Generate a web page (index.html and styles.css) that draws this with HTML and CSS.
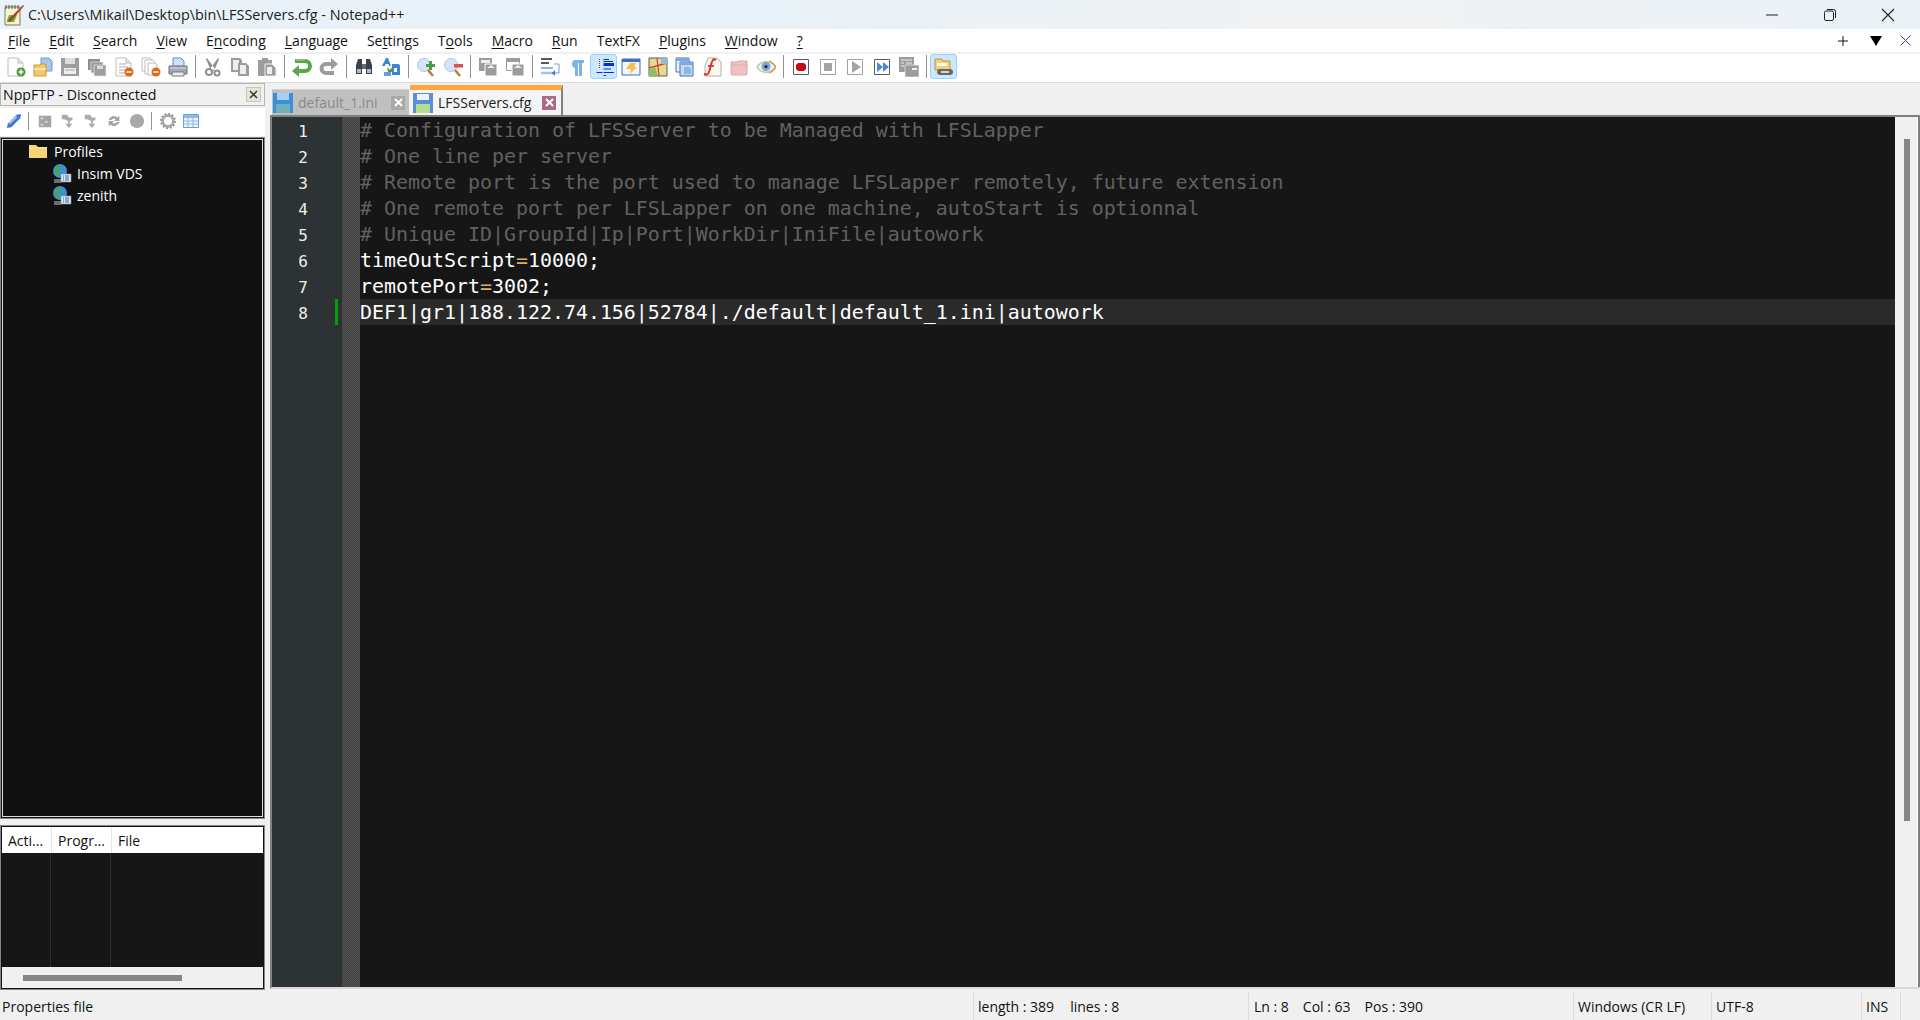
FILE: index.html
```html
<!DOCTYPE html>
<html lang="en">
<head>
<meta charset="utf-8">
<title>Notepad++</title>
<link rel="stylesheet" href="styles.css">
</head>
<body>
<svg class="defs" width="0" height="0" aria-hidden="true">
<defs>
<symbol id="page" viewBox="0 0 20 20"><path d="M2 1h10l5 5v13H2z" fill="#fff" stroke="#bdbdbd"/><path d="M12 1v5h5" fill="#e6e6e6" stroke="#bdbdbd"/></symbol>
<symbol id="lines" viewBox="0 0 20 20"><path d="M5 7h7M5 10h9M5 13h9M5 16h6" stroke="#a8a8a8"/></symbol>
<symbol id="badge" viewBox="0 0 20 20"><circle cx="15" cy="15" r="4.5" fill="#e2691c"/><path d="M12.5 15h5" stroke="#fff" stroke-width="1.6"/></symbol>
</defs>
</svg>
<div class="app">
  <header class="titlebar">
    <svg class="app-icon" width="22" height="22" viewBox="0 0 22 22"><path d="M2 3h15v18H2z" fill="#f6f2cf" stroke="#807b52"/><path d="M3 1v4M6 1v4M9 1v4M12 1v4M15 1v4" stroke="#555"/><path d="M4 16l2-5 8 0-3 7H4z" fill="#6ab33c"/><path d="M6 15L20 1l1 1-13 15-3 1z" fill="#b23a2c"/></svg>
    <span class="title-text">C:\Users\Mikail\Desktop\bin\LFSServers.cfg - Notepad++</span>
    <div class="window-controls">
      <svg width="14" height="14" viewBox="0 0 14 14"><path d="M1 7h12" stroke="#222" stroke-width="1"/></svg>
      <svg width="14" height="14" viewBox="0 0 14 14"><rect x="1.5" y="3" width="9" height="9.5" rx="1.5" fill="none" stroke="#222"/><path d="M4 1.5h6.5a2 2 0 0 1 2 2V10" fill="none" stroke="#222"/></svg>
      <svg width="14" height="14" viewBox="0 0 14 14"><path d="M1 1l12 12M13 1L1 13" stroke="#222" stroke-width="1.1"/></svg>
    </div>
  </header>
  <nav class="menubar">
    <span class="menu-item"><u>F</u>ile</span>
    <span class="menu-item"><u>E</u>dit</span>
    <span class="menu-item"><u>S</u>earch</span>
    <span class="menu-item"><u>V</u>iew</span>
    <span class="menu-item">E<u>n</u>coding</span>
    <span class="menu-item"><u>L</u>anguage</span>
    <span class="menu-item">Se<u>t</u>tings</span>
    <span class="menu-item">T<u>o</u>ols</span>
    <span class="menu-item"><u>M</u>acro</span>
    <span class="menu-item"><u>R</u>un</span>
    <span class="menu-item">TextFX</span>
    <span class="menu-item"><u>P</u>lugins</span>
    <span class="menu-item"><u>W</u>indow</span>
    <span class="menu-item"><u>?</u></span>
    <div class="menu-right">
      <svg width="10" height="10" viewBox="0 0 10 10"><path d="M5 0v10M0 5h10" stroke="#111"/></svg>
      <svg width="12" height="10" viewBox="0 0 12 10"><path d="M0 0h12L6 10z" fill="#000"/></svg>
      <svg width="11" height="11" viewBox="0 0 11 11"><path d="M.5.5l10 10M10.500.5l-10 10" stroke="#33506e"/></svg>
    </div>
  </nav>
  <div class="toolbar">
    <span class="tool"><svg width="20" height="20"><use href="#page"/><circle cx="15" cy="15" r="4.500" fill="#4d9a3a"/><path d="M12.500 15h5M15 12.500v5" stroke="#fff" stroke-width="1.500"/></svg></span>
    <span class="tool"><svg width="20" height="20" viewBox="0 0 20 20"><path d="M8 1h8l3 3v10H8z" fill="#a9c7ea" stroke="#6f9bd0"/><path d="M1 8h6l1-1h5v12H1z" fill="#f6c765" stroke="#cc9638"/><path d="M1 12h12" stroke="#fff"/></svg></span>
    <span class="tool"><svg width="20" height="20" viewBox="0 0 20 20"><path d="M1 1h18v18H1z" fill="#9d9d9d"/><path d="M5 1h10v6H5z" fill="#ddd"/><path d="M4 11h12v6H4z" fill="#eee"/><path d="M5 13h10" stroke="#aaa"/></svg></span>
    <span class="tool"><svg width="20" height="20" viewBox="0 0 20 20"><path d="M1 2h12v11H1z" fill="#8f8f8f"/><path d="M4 5h12v11H4z" fill="#9a9a9a" stroke="#e8e8e8" stroke-width=".7"/><path d="M7 8h12v11H7z" fill="#9d9d9d" stroke="#e8e8e8" stroke-width=".7"/><path d="M10 9h6v3h-6z" fill="#ddd"/></svg></span>
    <span class="tool"><svg width="20" height="20"><use href="#page"/><use href="#lines"/><use href="#badge"/></svg></span>
    <span class="tool"><svg width="20" height="20" viewBox="0 0 20 20"><path d="M1 1h8l2 2v11H1z" fill="#fff" stroke="#bdbdbd"/><path d="M4 3h8l2 2v12H4z" fill="#fff" stroke="#bdbdbd"/><path d="M7 6h7l2 2v10H7z" fill="#fff" stroke="#bdbdbd"/><circle cx="15" cy="15" r="4.500" fill="#e2691c"/><path d="M12.500 15h5" stroke="#fff" stroke-width="1.600"/></svg></span>
    <span class="tool"><svg width="20" height="20" viewBox="0 0 20 20"><path d="M5 1h8l3 3v6H5z" fill="#cfe1f6" stroke="#5c8fc9"/><path d="M1 9h18v8H1z" fill="#a4aab2" stroke="#6a6f76"/><path d="M4 15h12v4H4z" fill="#ececec" stroke="#777"/><path d="M2 11h16" stroke="#dde0e4"/></svg></span>
    <span class="sep"></span>
    <span class="tool"><svg width="20" height="20" viewBox="0 0 20 20"><path d="M7 12L15 1l1 1-5 12zM12 12L4 1 3 2l5 12z" fill="#8f8f8f"/><circle cx="6" cy="15" r="3" fill="none" stroke="#8f8f8f" stroke-width="2"/><circle cx="14" cy="16" r="2.600" fill="none" stroke="#8f8f8f" stroke-width="2"/></svg></span>
    <span class="tool"><svg width="20" height="20" viewBox="0 0 20 20"><path d="M1 1h9l2 2v12H1z" fill="#9c9c9c"/><path d="M3 3h6v10H3z" fill="#eee"/><path d="M8 6h8l3 3v10H8z" fill="#9c9c9c"/><path d="M10 8h6v9h-6z" fill="#eee"/></svg></span>
    <span class="tool"><svg width="20" height="20" viewBox="0 0 20 20"><path d="M1 3h4V1h6v2h4v16H1z" fill="#9c9c9c"/><path d="M8 7h7l4 4v8H8z" fill="#9c9c9c" stroke="#eee"/><path d="M10 10h5v7h-5z" fill="#eee"/></svg></span>
    <span class="sep"></span>
    <span class="tool"><svg width="20" height="20" viewBox="0 0 20 20"><path d="M3 4h10a5 5 0 0 1 0 10H6" fill="none" stroke="#5aa64c" stroke-width="4"/><path d="M0 14l7-6v12z" fill="#5aa64c"/><path d="M4 3h9" stroke="#a9d49a"/></svg></span>
    <span class="tool"><svg width="20" height="20" viewBox="0 0 20 20"><path d="M14 7H7a4.500 4.500 0 0 0 0 9h8" fill="none" stroke="#9c9c9c" stroke-width="4"/><path d="M19 7l-7-6v12z" fill="#9c9c9c"/></svg></span>
    <span class="sep"></span>
    <span class="tool"><svg width="20" height="20" viewBox="0 0 20 20"><path d="M4 2h4v15H2V8zM12 2h4l2 6v9h-6z" fill="#39424d"/><path d="M8 7h4v5H8z" fill="#616a75"/><path d="M3 12h4v4H3zM13 12h4v4h-4z" fill="#b0bac6"/></svg></span>
    <span class="tool"><svg width="20" height="20" viewBox="0 0 20 20"><path d="M1 9L5 1h2l3 8H8l-.5-2h-3L4 9z" fill="#3d83d4"/><path d="M6 10l3 3 1-3 2 5-5 0z" fill="#4f9a3f"/><path d="M11 7h6a2 2 0 0 1 2 2v9h-8z" fill="#3d83d4"/><path d="M13 11h3v4h-3z" fill="#fff"/><path d="M3 15h7v4H3z" fill="#3d83d4" opacity=".8"/></svg></span>
    <span class="sep"></span>
    <span class="tool"><svg width="20" height="20" viewBox="0 0 20 20"><circle cx="8" cy="8" r="6.500" fill="#d3e5f6" stroke="#a9c6e2"/><path d="M12 13l5 6" stroke="#b77c3e" stroke-width="2.500"/><path d="M10 7h3V4h3v3h3v3h-3v3h-3v-3h-3z" fill="#4f9d4a"/></svg></span>
    <span class="tool"><svg width="20" height="20" viewBox="0 0 20 20"><circle cx="8" cy="8" r="6.500" fill="#d3e5f6" stroke="#a9c6e2"/><path d="M12 13l5 6" stroke="#b77c3e" stroke-width="2.500"/><path d="M11 7h9v3.500h-9z" fill="#e14d55"/></svg></span>
    <span class="sep"></span>
    <span class="tool"><svg width="20" height="20" viewBox="0 0 20 20"><path d="M1 1h13v13H1z" fill="#9c9c9c"/><path d="M3 3h9v3H3z" fill="#eee"/><path d="M7 7h12v12H7z" fill="#9c9c9c" stroke="#fff"/><path d="M9 11l4-3 4 3z" fill="#eee"/></svg></span>
    <span class="tool"><svg width="20" height="20" viewBox="0 0 20 20"><path d="M1.500 1.500h13v12h-13z" fill="#fff" stroke="#9c9c9c"/><path d="M1 1h14v4H1z" fill="#9c9c9c"/><path d="M7 7h12v12H7z" fill="#9c9c9c" stroke="#fff"/><path d="M9 11l4-3 4 3z" fill="#eee"/></svg></span>
    <span class="sep"></span>
    <span class="tool"><svg width="20" height="20" viewBox="0 0 20 20"><path d="M1 2h11M1 6h8" stroke="#222" stroke-width="1.500"/><path d="M1 11h12" stroke="#6a9bdb" stroke-width="1.500"/><path d="M1 16h12" stroke="#9cc0ea" stroke-width="2.500"/><path d="M14 7h5v9h-7" fill="none" stroke="#6a9bdb"/><path d="M15 13v6l-3-3z" fill="#3a78c8"/></svg></span>
    <span class="tool"><svg width="20" height="20" viewBox="0 0 20 20"><path d="M8 3h9v3h-2v13h-3V6h-1v13H8v-8a4 4 0 0 1-3-4 4 4 0 0 1 3-4z" fill="#7fb0e8"/></svg></span>
    <span class="tool tool-active"><svg width="20" height="20" viewBox="0 0 20 20"><path d="M9.500 2.500H15M9.500 4.500H19M9.500 12H17M2.500 15.500h6M9.500 15.500H20M9.500 18.500H12" stroke="#0b2be0" fill="none"/><path d="M9.500 6H20v3H9.500z" fill="#0b2be0"/><path d="M5.500 2v10" stroke="#c22" stroke-dasharray="1 1"/></svg></span>
    <span class="tool"><svg width="20" height="20" viewBox="0 0 20 20"><path d="M1 2h18v16H1z" fill="#f2f6fb" stroke="#3f6fb5"/><path d="M1 2h18v3H1z" fill="#3f6fb5"/><path d="M9 6h6l-2 4h3l-7 7 1-5H5z" fill="#f1c245"/></svg></span>
    <span class="tool"><svg width="20" height="20" viewBox="0 0 20 20"><path d="M1 1h18v18H1z" fill="#e3dc8c" stroke="#5b5b5b"/><path d="M9 1l2 18M1 11L19 6" stroke="#c94b37" stroke-width="1.300"/><path d="M1 13l6-3 3 9H1z" fill="#8cc063"/><path d="M13 1h6v6h-6z" fill="#8fb9dc"/></svg></span>
    <span class="tool"><svg width="20" height="20" viewBox="0 0 20 20"><path d="M1 1h13v14H1z" fill="#e6effa" stroke="#3f74bd"/><path d="M1 1h13v3H1z" fill="#7fa9dc"/><path d="M5 5h13v14H5z" fill="#c4d8f1" stroke="#3f74bd"/><path d="M5 5h13v3H5z" fill="#7fa9dc"/><path d="M9 10h5l2 2v5H9z" fill="#8fb3e4"/></svg></span>
    <span class="tool"><svg width="20" height="20" viewBox="0 0 20 20"><path d="M6 1h9l4 4v14H3V9z" fill="#faf8f0" stroke="#b7b0a0"/><path d="M14 3c-3-2-4 1-5 5l-2 7c-1 3-3 3-5 2" fill="none" stroke="#d9342c" stroke-width="2"/><path d="M6 9h6" stroke="#d9342c" stroke-width="1.800"/></svg></span>
    <span class="tool"><svg width="20" height="20" viewBox="0 0 20 20"><path d="M2 5h6l1-1h9v13a1 1 0 0 1-1 1H3a1 1 0 0 1-1-1z" fill="#f0c1c1" stroke="#dba6a6"/><path d="M2 8h16" stroke="#e9a9a9"/></svg></span>
    <span class="tool"><svg width="20" height="20" viewBox="0 0 20 20"><path d="M1 10c4-7 14-7 19 0-5 7-15 7-19 0z" fill="#eef2ee" stroke="#bcc59e" stroke-width="1.500"/><path d="M13 4c3 1 5 3 7 6-2 3-4 5-7 6" fill="none" stroke="#d9a162" stroke-width="1.500"/><circle cx="10" cy="9.500" r="4.500" fill="#7da6d6"/><circle cx="10" cy="9.500" r="1.600" fill="#223"/></svg></span>
    <span class="sep"></span>
    <span class="tool"><svg width="20" height="20" viewBox="0 0 20 20"><path d="M2.500 2.500h15v15h-15z" fill="#fff" stroke="#5a5a5a"/><path d="M7 6h6l2 2v4l-2 2H7l-2-2V8z" fill="#c80914"/></svg></span>
    <span class="tool"><svg width="20" height="20" viewBox="0 0 20 20"><path d="M2.500 2.500h15v15h-15z" fill="#fff" stroke="#a3a3a3"/><path d="M6 6h8v8H6z" fill="#a3a3a3"/></svg></span>
    <span class="tool"><svg width="20" height="20" viewBox="0 0 20 20"><path d="M2.500 2.500h15v15h-15z" fill="#fff" stroke="#a3a3a3"/><path d="M7 4l9 6-9 6z" fill="#a3a3a3"/></svg></span>
    <span class="tool"><svg width="20" height="20" viewBox="0 0 20 20"><path d="M2.500 2.500h15v15h-15z" fill="#fff" stroke="#5a5a5a"/><path d="M5 5l6 5-6 5zM11 5l6 5-6 5z" fill="#4c86da"/></svg></span>
    <span class="tool"><svg width="20" height="20" viewBox="0 0 20 20"><path d="M0 0h15v15H0z" fill="#9c9c9c"/><path d="M2 3h11M2 6h3M7 6h6M2 9h3M7 9h4" stroke="#eee"/><path d="M6 8h14v12H6z" fill="#9c9c9c" stroke="#eee" stroke-width=".7"/><path d="M13 11h5v2h-5z" fill="#eee"/></svg></span>
    <span class="sep"></span>
    <span class="tool tool-active"><svg width="20" height="20" viewBox="0 0 20 20"><path d="M1 2h7l1 2h7v9H1z" fill="#f6cf72" stroke="#bd9444"/><path d="M3 6h10v3H3z" fill="#fff"/><path d="M6 12h10a3 3 0 0 1 0 6H6a3 3 0 0 1 0-6z" fill="#666"/><path d="M7 15h8" stroke="#d5d5d5" stroke-width="2"/></svg></span>
  </div>
  <main class="workspace">
    <aside class="sidepanel">
      <div class="panel-title">
        <span>NppFTP - Disconnected</span>
        <span class="panel-close"><svg width="9" height="9" viewBox="0 0 9 9"><path d="M1 1l7 7M8 1L1 8" stroke="#333" stroke-width="1.500"/></svg></span>
      </div>
      <div class="panel-tools">
        <span class="ptool"><svg viewBox="0 0 18 18"><path d="M2 12L12 2l5-1-1 5L6 16l-5 1z" fill="#3f78c6"/><path d="M4 12l8-8" stroke="#a9c9ec" stroke-width="2"/></svg></span>
        <span class="psep"></span>
        <span class="ptool"><svg viewBox="0 0 18 18"><path d="M2 3h14v13H2z" fill="#a5a5a5"/><path d="M4 5h3v2H4zM9 9h3v2H9zM4 12h3v2H4z" fill="#d5d5d5"/></svg></span>
        <span class="ptool"><svg viewBox="0 0 18 18"><path d="M2 2h6l2 3h4v3l-3 1v3h3l-4 5-4-5h3V9L5 7H2z" fill="#ababab"/></svg></span>
        <span class="ptool"><svg viewBox="0 0 18 18"><path d="M2 2h6l2 3h4v3l-3 1v3h3l-4 5-4-5h3V9L5 7H2z" fill="#ababab"/></svg></span>
        <span class="ptool"><svg viewBox="0 0 18 18"><path d="M3 8a6 6 0 0 1 10-3l2-2v6H9l2-2a3.500 3.500 0 0 0-5 1zM15 10a6 6 0 0 1-10 3l-2 2V9h6l-2 2a3.500 3.500 0 0 0 5-1z" fill="#a3a3a3"/></svg></span>
        <span class="ptool"><svg viewBox="0 0 18 18"><circle cx="9" cy="9" r="8" fill="#a8a8a8"/></svg></span>
        <span class="psep"></span>
        <span class="ptool"><svg viewBox="0 0 18 18"><circle cx="9" cy="9" r="6" fill="none" stroke="#a8a8a8" stroke-width="3"/><circle cx="9" cy="9" r="8" fill="none" stroke="#8b8b8b" stroke-width="2" stroke-dasharray="2 2.200"/></svg></span>
        <span class="ptool"><svg viewBox="0 0 16 14"><path d="M.5.5h15v13H.5z" fill="#eef4fb" stroke="#6f9fd8"/><path d="M1 1h14v3H1z" fill="#8fb8e8"/><path d="M1 7h14M1 10h14M5 4v9M10 4v9" stroke="#8fb8e8"/></svg></span>
      </div>
      <div class="tree">
        <div class="tree-row tree-root">
          <svg width="18" height="14" viewBox="0 0 18 14"><path d="M0 1h7l2 2h9v11H0z" fill="#f7d474"/><path d="M0 4h18" stroke="#fbe7ac"/></svg>
          <span>Profiles</span>
        </div>
        <div class="tree-row tree-child">
          <svg width="20" height="20" viewBox="0 0 20 20"><circle cx="8" cy="8" r="7" fill="#3f8fd8"/><path d="M3 5l4-3 2 3-3 3 2 3-2 3-3-4z" fill="#4aa84a"/><path d="M9 11h10v8H9z" fill="#dfe6ee" stroke="#8a97a6" stroke-width=".6"/><path d="M11 13h1M13 13h4M11 15h1M13 15h4M11 17h1M13 17h4" stroke="#2f6fb4"/><path d="M2 17h7M2 19h7" stroke="#c5ccd3"/></svg>
          <span>Insım VDS</span>
        </div>
        <div class="tree-row tree-child">
          <svg width="20" height="20" viewBox="0 0 20 20"><circle cx="8" cy="8" r="7" fill="#3f8fd8"/><path d="M3 5l4-3 2 3-3 3 2 3-2 3-3-4z" fill="#4aa84a"/><path d="M9 11h10v8H9z" fill="#dfe6ee" stroke="#8a97a6" stroke-width=".6"/><path d="M11 13h1M13 13h4M11 15h1M13 15h4M11 17h1M13 17h4" stroke="#2f6fb4"/><path d="M2 17h7M2 19h7" stroke="#c5ccd3"/></svg>
          <span>zenith</span>
        </div>
      </div>
      <div class="queue">
        <div class="queue-head">
          <span class="qh qh-a">Acti...</span>
          <span class="qh qh-b">Progr...</span>
          <span class="qh qh-c">File</span>
        </div>
        <div class="queue-body">
          <span class="qc qc-a"></span>
          <span class="qc qc-b"></span>
        </div>
        <div class="queue-scroll"><span class="queue-thumb"></span></div>
      </div>
    </aside>
    <section class="editor-area">
      <div class="tabs">
        <div class="tab tab-off">
          <svg width="20" height="20" viewBox="0 0 20 20"><path d="M0 0h20v20H0z" fill="#3a8fdc"/><path d="M4 0h12v7H4z" fill="#a7cfee"/><path d="M3 11h14v9H3z" fill="#6fb0bd"/></svg>
          <span class="tab-name">default_1.ini</span>
          <span class="tab-x tab-x-off"><svg width="9" height="9" viewBox="0 0 9 9"><path d="M1 1l7 7M8 1L1 8" stroke="#fff" stroke-width="2"/></svg></span>
        </div>
        <div class="tab tab-on">
          <svg width="20" height="20" viewBox="0 0 20 20"><path d="M0 0h20v20H0z" fill="#5b8ed6"/><path d="M4 1h12v6H4z" fill="#eef3fa"/><path d="M3 11h14v9H3z" fill="#b6dc93"/></svg>
          <span class="tab-name">LFSServers.cfg</span>
          <span class="tab-x tab-x-on"><svg width="9" height="9" viewBox="0 0 9 9"><path d="M1 1l7 7M8 1L1 8" stroke="#fff" stroke-width="2"/></svg></span>
        </div>
      </div>
      <div class="editor">
        <div class="gutter">
          <div class="ln">1</div><div class="ln">2</div><div class="ln">3</div><div class="ln">4</div><div class="ln">5</div><div class="ln">6</div><div class="ln">7</div><div class="ln ln-changed">8</div>
        </div>
        <div class="fold"></div>
        <div class="code">
          <div class="line cmt"># Configuration of LFSServer to be Managed with LFSLapper</div>
          <div class="line cmt"># One line per server</div>
          <div class="line cmt"># Remote port is the port used to manage LFSLapper remotely, future extension</div>
          <div class="line cmt"># One remote port per LFSLapper on one machine, autoStart is optionnal</div>
          <div class="line cmt"># Unique ID|GroupId|Ip|Port|WorkDir|IniFile|autowork</div>
          <div class="line">timeOutScript<span class="eq">=</span>10000;</div>
          <div class="line">remotePort<span class="eq">=</span>3002;</div>
          <div class="line line-current">DEF1|gr1|188.122.74.156|52784|./default|default_1.ini|autowork</div>
        </div>
        <div class="vscroll"><span class="vthumb"></span></div>
      </div>
    </section>
  </main>
  <footer class="statusbar">
    <span class="cell cell-type">Properties file</span>
    <span class="cell cell-len"><span>length : 389</span><span>lines : 8</span></span>
    <span class="cell cell-pos"><span>Ln : 8</span><span>Col : 63</span><span>Pos : 390</span></span>
    <span class="cell cell-eol">Windows (CR LF)</span>
    <span class="cell cell-enc">UTF-8</span>
    <span class="cell cell-ins">INS</span>
  </footer>
</div>
</body>
</html>
```

FILE: styles.css
```css
* { box-sizing: border-box; }
html, body { margin: 0; height: 100%; overflow: hidden; }
body { font-family: "Open Sans", "Noto Sans", sans-serif; font-size: 13px; color: #111; background: #f0f0f0; }
.defs { position: absolute; }
svg { display: block; flex: none; }
.app { width: 1920px; height: 1020px; display: flex; flex-direction: column; }

.titlebar { height: 29px; display: flex; align-items: center; padding-left: 3px; background: linear-gradient(90deg, #e9f2f8 0%, #e9f2f8 40%, #f0f1f2 70%, #eaf2f8 100%); }
.app-icon { margin-right: 3px; }
.title-text { font-size: 14.4px; color: #222; }
.window-controls { margin-left: auto; display: flex; gap: 44px; padding-right: 25px; }

.menubar { height: 23px; background: #fff; display: flex; align-items: center; padding-left: 8px; gap: 19px; font-size: 14px; flex: none; }
.menu-item u { text-underline-offset: 2px; }
.menu-right { margin-left: auto; display: flex; align-items: center; padding-right: 9px; }
.menu-right svg + svg { margin-left: 22px; }
.menu-right svg:last-child { margin-left: 18px; }

.toolbar { margin-top: 2px; height: 28px; background: #fff; display: flex; align-items: flex-start; padding-left: 2px; flex: none; }
.tool { width: 27px; height: 25px; display: flex; align-items: center; justify-content: center; border: 1px solid transparent; border-radius: 3px; }
.tool-active { background: #cce8ff; border-color: #99d1ff; }
.sep { width: 8px; height: 23px; margin-top: 1px; display: flex; justify-content: center; }
.sep::after { content: ""; width: 1px; background: #8f8f8f; }

.workspace { flex: 1; min-height: 0; display: flex; border-top: 1px solid #d9d9d9; }

.sidepanel { width: 265px; flex: none; display: flex; flex-direction: column; padding-bottom: 2px; }
.panel-title { height: 23px; border: 1px solid #b5b5b5; display: flex; align-items: center; justify-content: space-between; padding: 0 3px 0 2px; font-size: 14.2px; background: #f0f0f0; }
.panel-close { width: 15px; height: 15px; background: #e6e4d6; border: 1px solid #c8c6b8; display: flex; align-items: center; justify-content: center; }
.panel-tools { height: 28px; margin-top: 2px; padding: 0 0 3px 2px; background: #fff; display: flex; align-items: center; }
.ptool { width: 23px; display: flex; justify-content: center; }
.ptool svg { width: 16px; height: 16px; }
.psep { width: 1px; height: 18px; background: #8f8f8f; margin: 0 4px 0 3px; }
.tree { height: 682px; margin-top: 1px; background: #111; border: 2px solid #111; outline: 1px solid #888; outline-offset: -1px; box-shadow: inset 0 0 0 1px #ddd; color: #fff; font-size: 14px; padding-top: 1px; }
.tree-row { display: flex; align-items: center; height: 22px; gap: 5px; }
.tree-root { padding-left: 27px; gap: 7px; }
.tree-child { padding-left: 50px; }

.queue { flex: 1; margin-top: 6px; background: #161616; border: 2px solid #111; outline: 1px solid #888; outline-offset: -1px; display: flex; flex-direction: column; }
.queue-head { height: 26px; background: #fff; display: flex; align-items: center; font-size: 14px; }
.qh { height: 100%; display: flex; align-items: center; padding-left: 6px; border-right: 1px solid #e5e5e5; }
.qh-a { width: 50px; }
.qh-b { width: 60px; }
.qh-c { border-right: 0; }
.queue-body { flex: 1; display: flex; }
.qc { display: block; border-right: 1px solid #2e2e2e; }
.qc-a { width: 49px; }
.qc-b { width: 60px; }
.queue-scroll { height: 21px; background: #f0f0f0; display: flex; align-items: center; padding-left: 21px; }
.queue-thumb { width: 159px; height: 6px; background: #858585; }

.editor-area { flex: 1; min-width: 0; padding: 1px 0 3px 5px; display: flex; flex-direction: column; }
.tabs { height: 31px; display: flex; align-items: flex-end; gap: 1px; flex: none; padding: 0 0 0 2px; }
.tab { height: 30px; display: flex; align-items: center; position: relative; font-size: 14px; gap: 5px; }
.tab-off { width: 137px; height: 26px; padding: 0 4px 0 1px; background: #c0c0c0; color: #8a8a8a; border-top: 1px solid #d4d4d4; }
.tab-on { width: 153px; padding: 0 5px 0 3px; background: #f4f4f4; color: #222; border-top: 5px solid #ffa63c; border-right: 2px solid #808080; }
.tab-x { width: 14px; height: 14px; display: flex; align-items: center; justify-content: center; margin-left: auto; }
.tab-x-off { background: #a9a9a9; }
.tab-x-on { background: #ab6a86; }

.editor { flex: 1; min-height: 0; display: flex; background: #161616; border-top: 2px solid #808080; border-left: 2px solid #808080; border-bottom: 2px solid #d8d8d8; }
.gutter { width: 70px; background: #2d3335; flex: none; }
.ln { height: 26px; line-height: 29px; font-family: "DejaVu Sans Mono", monospace; font-size: 16px; color: #eee; text-align: center; position: relative; width: 62px; }
.ln-changed::after { content: ""; position: absolute; left: 63px; top: 0; width: 3px; height: 100%; background: #0a9a0a; }
.fold { width: 18px; flex: none; background-color: #454545; background-image: repeating-conic-gradient(#565656 0 25%, #3d3d3d 0 50%); background-size: 2px 2px; }
.code { flex: 1; min-width: 0; font-family: "DejaVu Sans Mono", monospace; font-size: 19.93px; color: #fff; }
.line { height: 26px; line-height: 28px; white-space: pre; }
.cmt { color: #616161; }
.eq { color: #d8b070; }
.line-current { background: #2a2a2a; }
.vscroll { width: 25px; flex: none; background: #f0f0f0; border-right: 2px solid #808080; box-shadow: inset -1px 0 #fff; display: flex; justify-content: center; padding-top: 22px; }
.vthumb { display: block; width: 6px; height: 682px; background: #858585; }

.statusbar { height: 28px; flex: none; display: flex; align-items: center; font-size: 14px; background: #f0f0f0; }
.cell { height: 100%; display: flex; align-items: center; padding: 1px 0 0 4px; border-right: 1px solid #dcdcdc; white-space: nowrap; }
.cell-type { width: 974px; padding-left: 2px; }
.cell-len { width: 275px; gap: 16px; }
.cell-pos { width: 325px; gap: 14px; padding-left: 5px; }
.cell-eol { width: 138px; }
.cell-enc { width: 150px; }
.cell-ins { width: 39px; }
```
